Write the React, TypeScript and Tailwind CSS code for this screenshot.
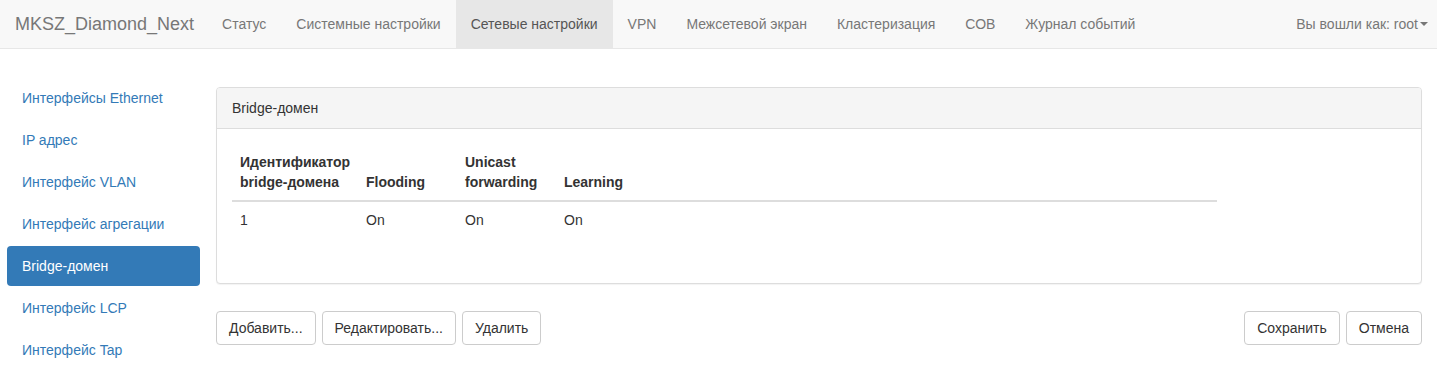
import React from "react";

const navItems = [
  "Статус",
  "Системные настройки",
  "Сетевые настройки",
  "VPN",
  "Межсетевой экран",
  "Кластеризация",
  "СОВ",
  "Журнал событий",
];

const sideItems = [
  "Интерфейсы Ethernet",
  "IP адрес",
  "Интерфейс VLAN",
  "Интерфейс агрегации",
  "Bridge-домен",
  "Интерфейс LCP",
  "Интерфейс Tap",
];

function Btn({ children }: { children: React.ReactNode }) {
  return (
    <button className="h-[34px] px-[12px] border border-[#ccc] bg-white rounded-[4px] text-[14px] leading-[20px] text-[#333]">
      {children}
    </button>
  );
}

export default function App() {
  return (
    <div
      className="w-[1437px] h-[372px] bg-white text-[#333] text-[14px] leading-[20px] overflow-hidden"
      style={{ fontFamily: '"Liberation Sans", Arial, sans-serif' }}
    >
      <nav className="h-[49px] bg-[#f8f8f8] border-b border-[#e7e7e7] flex items-stretch">
        <div className="pl-[15px] pr-[13px] flex items-center text-[18px] text-[#777]">
          MKSZ_Diamond_Next
        </div>
        <ul className="flex items-stretch">
          {navItems.map((n) => (
            <li
              key={n}
              className={
                "px-[15px] flex items-center " +
                (n === "Сетевые настройки" ? "bg-[#e7e7e7] text-[#555]" : "text-[#777]")
              }
            >
              {n}
            </li>
          ))}
        </ul>
        <div className="ml-auto pr-[9px] flex items-center text-[#777]">
          Вы вошли как: root
          <span className="inline-block ml-[2px] w-0 h-0 border-t-[4px] border-t-[#777] border-x-[4px] border-x-transparent" />
        </div>
      </nav>

      <div className="flex pl-[7px] pr-[15px]">
        <ul className="w-[193px] shrink-0 mt-[29px] flex flex-col gap-[2px]">
          {sideItems.map((s) => (
            <li
              key={s}
              className={
                "h-[40px] px-[15px] flex items-center rounded-[4px] " +
                (s === "Bridge-домен" ? "bg-[#337ab7] text-white" : "text-[#337ab7]")
              }
            >
              {s}
            </li>
          ))}
        </ul>

        <div className="flex-1 ml-[16px] mt-[38px]">
          <div className="border border-[#ddd] rounded-[4px] bg-white shadow-[0_1px_1px_rgba(0,0,0,0.05)]">
            <div className="bg-[#f5f5f5] border-b border-[#ddd] px-[15px] py-[10px] rounded-t-[3px]">
              Bridge-домен
            </div>
            <div className="p-[15px]">
              <table className="table-fixed w-[985px] border-collapse mb-[30px]">
                <colgroup>
                  <col className="w-[126px]" />
                  <col className="w-[99px]" />
                  <col className="w-[99px]" />
                  <col />
                </colgroup>
                <thead>
                  <tr>
                    <th className="p-[8px] text-left align-bottom font-bold border-b-2 border-[#ddd]">
                      Идентификатор bridge-домена
                    </th>
                    <th className="p-[8px] text-left align-bottom font-bold border-b-2 border-[#ddd]">
                      Flooding
                    </th>
                    <th className="p-[8px] text-left align-bottom font-bold border-b-2 border-[#ddd]">
                      Unicast forwarding
                    </th>
                    <th className="p-[8px] text-left align-bottom font-bold border-b-2 border-[#ddd]">
                      Learning
                    </th>
                  </tr>
                </thead>
                <tbody>
                  <tr>
                    <td className="p-[8px]">1</td>
                    <td className="p-[8px]">On</td>
                    <td className="p-[8px]">On</td>
                    <td className="p-[8px]">On</td>
                  </tr>
                </tbody>
              </table>
            </div>
          </div>

          <div className="flex mt-[27px]">
            <div className="flex gap-[6px]">
              <Btn>Добавить...</Btn>
              <Btn>Редактировать...</Btn>
              <Btn>Удалить</Btn>
            </div>
            <div className="flex gap-[6px] ml-auto">
              <Btn>Сохранить</Btn>
              <Btn>Отмена</Btn>
            </div>
          </div>
        </div>
      </div>
    </div>
  );
}
